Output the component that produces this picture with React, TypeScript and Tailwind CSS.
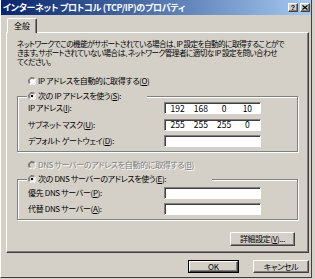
import React from "react";

const JP = "font-['Noto_Sans_CJK_JP','Noto_Sans_CJK_SC',sans-serif] [font-feature-settings:'palt']";

function U({ children }: { children: React.ReactNode }) {
  return <span className="underline underline-offset-[1px]">{children}</span>;
}

function Radio({ checked, disabled }: { checked?: boolean; disabled?: boolean }) {
  return (
    <svg width="8" height="8" viewBox="0 0 8 8" className="shrink-0">
      <path d="M7 1.5 A3.5 3.5 0 0 0 1.5 7" fill="none" stroke="#808080" strokeWidth="1" />
      <path d="M1.5 7 A3.5 3.5 0 0 0 7 1.5" fill="none" stroke="#ffffff" strokeWidth="1" />
      <circle cx="4" cy="4" r="3" fill={disabled ? "#d4d0c8" : "#ffffff"} />
      <path d="M6 2 A2.8 2.8 0 0 0 2 6" fill="none" stroke="#404040" strokeWidth="0.8" />
      {checked && <circle cx="4" cy="4" r="1.3" fill="#000" />}
    </svg>
  );
}

function Field({ children }: { children?: React.ReactNode }) {
  return (
    <div className="w-[97px] h-[12px] bg-white border border-t-[#808080] border-l-[#808080] border-r-white border-b-white shadow-[inset_1px_1px_0_#404040]">
      {children}
    </div>
  );
}

function IpField({ v }: { v: string[] }) {
  return (
    <Field>
      <div className="grid grid-cols-4 h-full items-center px-[1px] text-[8.5px] leading-none text-black">
        {v.map((x, i) => (
          <span key={i} className="text-center">
            {x}
          </span>
        ))}
      </div>
    </Field>
  );
}

const LBL = "text-[8px] leading-none tracking-[-0.35px] whitespace-nowrap";

function Row({ label, children }: { label: React.ReactNode; children: React.ReactNode }) {
  return (
    <div className="flex items-center h-[12px] pl-[10px]">
      <div className={`w-[136px] ${LBL}`}>{label}</div>
      {children}
    </div>
  );
}

const raised =
  "bg-[#d4d0c8] border border-t-white border-l-white border-r-[#404040] border-b-[#404040] shadow-[inset_-1px_-1px_0_#808080]";

export default function App() {
  return (
    <div className={`w-[315px] h-[279px] bg-[#d4d0c8] text-black ${JP}`}>
      <div className="w-[312px] h-[278px] border-l border-l-white border-r border-r-[#404040] border-b border-b-[#404040] flex flex-col">
        {/* title bar */}
        <div className="h-[15px] bg-linear-to-r from-[#0a246a] to-[#a6caf0] flex items-center pl-[2px] pr-[1px]">
          <span className="text-white font-bold text-[9px] leading-none whitespace-nowrap tracking-[-0.3px]">
            インターネット プロトコル (TCP/IP)のプロパティ
          </span>
          <div className="ml-auto flex gap-[2px]">
            <div className={`w-[10px] h-[9px] flex items-center justify-center ${raised}`}>
              <span className="text-[7px] font-bold leading-none font-['Liberation_Sans',sans-serif]">?</span>
            </div>
            <div className={`w-[10px] h-[9px] flex items-center justify-center ${raised}`}>
              <svg width="6" height="5" viewBox="0 0 6 5">
                <path d="M0.5 0.5 L5.5 4.5 M5.5 0.5 L0.5 4.5" stroke="#000" strokeWidth="1.2" />
              </svg>
            </div>
          </div>
        </div>

        {/* tab */}
        <div className="mt-[3px] ml-[6px] relative z-10 w-[30px] h-[15px] -mb-[1px] bg-[#d4d0c8] border-t border-l border-white border-r border-r-[#404040] shadow-[inset_-1px_0_0_#808080] rounded-t-[2px] flex items-center justify-center">
          <span className="text-[8px] leading-none mb-[1px]">全般</span>
        </div>

        {/* panel */}
        <div className="ml-[5px] w-[303px] h-[221px] border-t border-l border-white border-r border-r-[#404040] border-b border-b-[#404040] shadow-[inset_-1px_-1px_0_#808080] flex flex-col">
          <div className="mt-[6px] ml-[10px] text-[7.6px] leading-[9px] tracking-[-0.55px] whitespace-nowrap">
            <div>ネットワークでこの機能がサポートされている場合は、IP 設定を自動的に取得することがで</div>
            <div>きます。サポートされていない場合は、ネットワーク管理者に適切な IP 設定を問い合わせ</div>
            <div>てください。</div>
          </div>

          <div className={`mt-[10px] ml-[21px] h-[10px] flex items-center gap-[2px] ${LBL}`}>
            <Radio />
            <span>
              IP アドレスを自動的に取得する(<U>O</U>)
            </span>
          </div>

          {/* group 1 */}
          <div className="mt-[10px] mx-[10px] h-[56px] border border-[#808080] shadow-[inset_1px_1px_0_#fff,1px_1px_0_#fff] flex flex-col">
            <div className="-mt-[6px] h-[10px] flex">
              <div className="w-[9px]" />
              <div className={`w-[120px] bg-[#d4d0c8] flex items-center gap-[2px] pl-[1px] ${LBL}`}>
                <Radio checked />
                <span>
                  次の IP アドレスを使う(<U>S</U>):
                </span>
              </div>
            </div>
            <div className="mt-[1px] flex flex-col gap-[4.5px]">
              <Row label={<>IP アドレス(<U>I</U>):</>}>
                <IpField v={["192", "168", "0", "10"]} />
              </Row>
              <Row label={<>サブネット マスク(<U>U</U>):</>}>
                <IpField v={["255", "255", "255", "0"]} />
              </Row>
              <Row label={<>デフォルト ゲートウェイ(<U>D</U>):</>}>
                <Field />
              </Row>
            </div>
          </div>

          <div className={`mt-[8px] ml-[21px] h-[10px] flex items-center gap-[2px] ${LBL}`}>
            <Radio disabled />
            <span className="text-[#808080] [text-shadow:1px_1px_0_#fff]">
              DNS サーバーのアドレスを自動的に取得する(<U>B</U>)
            </span>
          </div>

          {/* group 2 */}
          <div className="mt-[9px] mx-[10px] h-[41px] border border-[#808080] shadow-[inset_1px_1px_0_#fff,1px_1px_0_#fff] flex flex-col">
            <div className="-mt-[6px] h-[10px] flex">
              <div className="w-[9px]" />
              <div className={`w-[185px] bg-[#d4d0c8] flex items-center gap-[2px] pl-[1px] ${LBL}`}>
                <Radio checked />
                <span>
                  次の DNS サーバーのアドレスを使う(<U>E</U>):
                </span>
              </div>
            </div>
            <div className="mt-[3px] flex flex-col gap-[4px]">
              <Row label={<>優先 DNS サーバー(<U>P</U>):</>}>
                <Field />
              </Row>
              <Row label={<>代替 DNS サーバー(<U>A</U>):</>}>
                <Field />
              </Row>
            </div>
          </div>

          <div className="mt-[12px] mr-[13px] flex justify-end">
            <div className={`w-[65px] h-[14px] flex items-center justify-center ${LBL} ${raised}`}>
              詳細設定(<U>V</U>)...
            </div>
          </div>
        </div>

        {/* bottom buttons */}
        <div className="mt-[7px] mr-[2px] flex justify-end gap-[14px]">
          <div className="w-[51px] h-[13px] border border-black">
            <div className={`w-full h-full flex items-center justify-center text-[8px] leading-none ${raised}`}>OK</div>
          </div>
          <div className={`w-[56px] h-[13px] flex items-center justify-center ${LBL} ${raised}`}>
            キャンセル
          </div>
        </div>
      </div>
    </div>
  );
}
